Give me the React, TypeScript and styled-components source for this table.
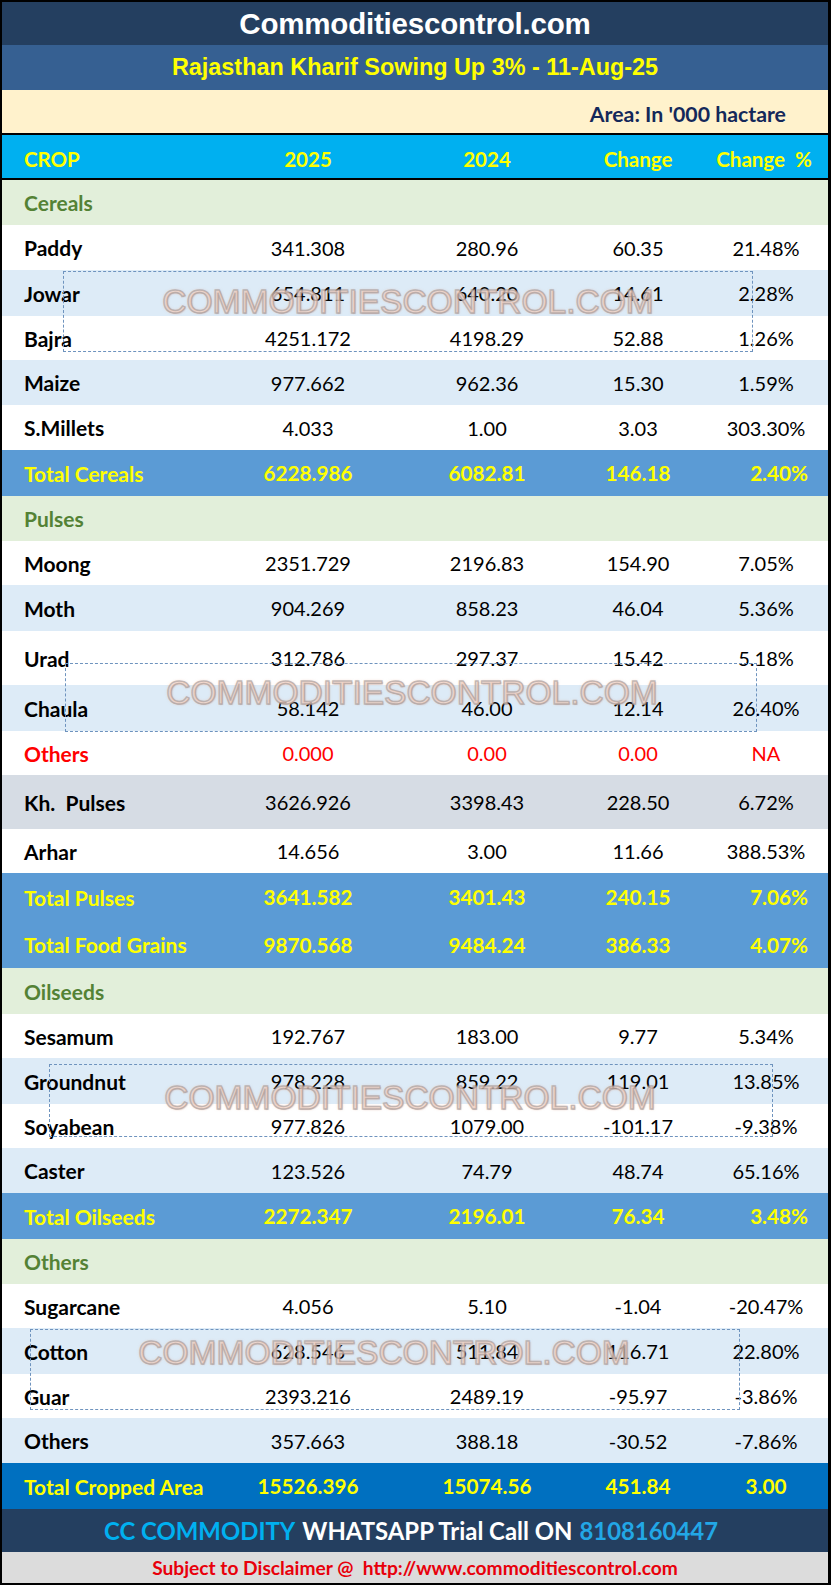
import React from "react";
import styled, { createGlobalStyle, css } from "styled-components";

const GlobalStyle = createGlobalStyle`
  html, body { margin: 0; padding: 0; background: #ffffff; }
  * { box-sizing: border-box; }
`;

const BODY_FONT = `Lato, "Open Sans", "Liberation Sans", sans-serif`;
const HEAD_FONT = `"Liberation Sans", Arial, sans-serif`;

type Kind = "category" | "plain" | "alt" | "total" | "red" | "grey" | "grand";

interface RowData {
  label: string;
  kind: Kind;
  h: number;
  values?: [string, string, string, string];
}

const rows: RowData[] = [
  { label: "Cereals", kind: "category", h: 45 },
  { label: "Paddy", kind: "plain", h: 45, values: ["341.308", "280.96", "60.35", "21.48%"] },
  { label: "Jowar", kind: "alt", h: 46, values: ["654.811", "640.20", "14.61", "2.28%"] },
  { label: "Bajra", kind: "plain", h: 44, values: ["4251.172", "4198.29", "52.88", "1.26%"] },
  { label: "Maize", kind: "alt", h: 45, values: ["977.662", "962.36", "15.30", "1.59%"] },
  { label: "S.Millets", kind: "plain", h: 45, values: ["4.033", "1.00", "3.03", "303.30%"] },
  { label: "Total Cereals", kind: "total", h: 46, values: ["6228.986", "6082.81", "146.18", "2.40%"] },
  { label: "Pulses", kind: "category", h: 45 },
  { label: "Moong", kind: "plain", h: 44, values: ["2351.729", "2196.83", "154.90", "7.05%"] },
  { label: "Moth", kind: "alt", h: 46, values: ["904.269", "858.23", "46.04", "5.36%"] },
  { label: "Urad", kind: "plain", h: 54, values: ["312.786", "297.37", "15.42", "5.18%"] },
  { label: "Chaula", kind: "alt", h: 46, values: ["58.142", "46.00", "12.14", "26.40%"] },
  { label: "Others", kind: "red", h: 44, values: ["0.000", "0.00", "0.00", "NA"] },
  { label: "Kh.  Pulses", kind: "grey", h: 54, values: ["3626.926", "3398.43", "228.50", "6.72%"] },
  { label: "Arhar", kind: "plain", h: 44, values: ["14.656", "3.00", "11.66", "388.53%"] },
  { label: "Total Pulses", kind: "total", h: 48, values: ["3641.582", "3401.43", "240.15", "7.06%"] },
  { label: "Total Food Grains", kind: "total", h: 47, values: ["9870.568", "9484.24", "386.33", "4.07%"] },
  { label: "Oilseeds", kind: "category", h: 46 },
  { label: "Sesamum", kind: "plain", h: 44, values: ["192.767", "183.00", "9.77", "5.34%"] },
  { label: "Groundnut", kind: "alt", h: 46, values: ["978.228", "859.22", "119.01", "13.85%"] },
  { label: "Soyabean", kind: "plain", h: 44, values: ["977.826", "1079.00", "-101.17", "-9.38%"] },
  { label: "Caster", kind: "alt", h: 45, values: ["123.526", "74.79", "48.74", "65.16%"] },
  { label: "Total Oilseeds", kind: "total", h: 46, values: ["2272.347", "2196.01", "76.34", "3.48%"] },
  { label: "Others", kind: "category", h: 45 },
  { label: "Sugarcane", kind: "plain", h: 44, values: ["4.056", "5.10", "-1.04", "-20.47%"] },
  { label: "Cotton", kind: "alt", h: 46, values: ["628.546", "511.84", "116.71", "22.80%"] },
  { label: "Guar", kind: "plain", h: 44, values: ["2393.216", "2489.19", "-95.97", "-3.86%"] },
  { label: "Others", kind: "alt", h: 45, values: ["357.663", "388.18", "-30.52", "-7.86%"] },
  { label: "Total Cropped Area", kind: "grand", h: 46, values: ["15526.396", "15074.56", "451.84", "3.00"] },
];

const watermarks = [
  { fx: 61, fy: 269, fw: 690, fh: 81, ty: 300, cx: 406 },
  { fx: 63, fy: 661, fw: 692, fh: 69, ty: 691, cx: 410 },
  { fx: 47, fy: 1062, fw: 724, fh: 73, ty: 1096, cx: 408 },
  { fx: 28, fy: 1327, fw: 710, fh: 81, ty: 1351, cx: 382 },
];

const bgFor: Record<Kind, string> = {
  category: "#E2EFDA",
  plain: "#FFFFFF",
  alt: "#DDEBF7",
  total: "#5B9BD5",
  red: "#FFFFFF",
  grey: "#D6DCE4",
  grand: "#0070C0",
};

const colorFor: Record<Kind, string> = {
  category: "#548235",
  plain: "#000000",
  alt: "#000000",
  total: "#FFFF00",
  red: "#FF0000",
  grey: "#000000",
  grand: "#FFFF00",
};

const Sheet = styled.div`
  position: relative;
  width: 831px;
  border: 2px solid #000;
  border-right-width: 3px;
  background: #fff;
  font-family: ${BODY_FONT};
`;

const TitleBar = styled.div`
  height: 43px;
  background: #243F60;
  display: flex;
  align-items: center;
  justify-content: center;
  color: #ffffff;
  font-family: ${HEAD_FONT};
  font-weight: 700;
  font-size: 29.5px;
  letter-spacing: -0.2px;
`;

const SubtitleBar = styled.div`
  height: 45px;
  background: #366092;
  display: flex;
  align-items: center;
  justify-content: center;
  color: #FFFF00;
  font-family: ${HEAD_FONT};
  font-weight: 700;
  font-size: 23.4px;
`;

const AreaBar = styled.div`
  height: 45px;
  background: #FFF2CC;
  border-bottom: 2px solid #000;
  display: flex;
  align-items: center;
  justify-content: flex-end;
  padding: 4px 42px 0 0;
  color: #14285A;
  font-weight: 700;
  font-size: 21.3px;
`;

const gridCols = css`
  display: grid;
  grid-template-columns: 216px 180px 178px 124px 1fr;
  align-items: center;
`;

const HeaderRow = styled.div`
  ${gridCols};
  height: 45px;
  background: #00B0F0;
  border-bottom: 2px solid #000;
  padding-top: 4px;
  color: #FFFF00;
  font-weight: 700;
  font-size: 20.5px;
`;

const HeadCell = styled.div<{ $left?: boolean }>`
  text-align: ${(p) => (p.$left ? "left" : "center")};
  padding-left: ${(p) => (p.$left ? "22px" : "0")};
  white-space: pre;
`;

const Row = styled.div<{ $kind: Kind; $h: number }>`
  ${gridCols};
  height: ${(p) => p.$h}px;
  background: ${(p) => bgFor[p.$kind]};
  color: ${(p) => colorFor[p.$kind]};
  font-size: ${(p) => (p.$kind === "total" || p.$kind === "grand" ? "20.7px" : "20px")};
  font-weight: ${(p) => (p.$kind === "total" || p.$kind === "grand" ? 700 : 400)};
`;

const LabelCell = styled.div`
  padding-left: 22px;
  font-weight: 700;
  font-size: 21px;
  white-space: pre;
`;

const NumCell = styled.div`
  text-align: center;
`;

const PctCell = styled.div<{ $right?: boolean }>`
  text-align: ${(p) => (p.$right ? "right" : "center")};
  padding-left: 4px;
  padding-right: ${(p) => (p.$right ? "20px" : "0")};
`;

const Frame = styled.div<{ $x: number; $y: number; $w: number; $h: number }>`
  position: absolute;
  left: ${(p) => p.$x}px;
  top: ${(p) => p.$y}px;
  width: ${(p) => p.$w}px;
  height: ${(p) => p.$h}px;
  border: 1px dashed #6E93BE;
  pointer-events: none;
`;

const Stamp = styled.div<{ $cx: number; $cy: number }>`
  position: absolute;
  left: ${(p) => p.$cx}px;
  top: ${(p) => p.$cy}px;
  transform: translate(-50%, -50%);
  font-family: ${HEAD_FONT};
  font-size: 33.5px;
  font-weight: 400;
  white-space: nowrap;
  color: rgba(250, 228, 218, 0.55);
  -webkit-text-stroke: 1.4px rgba(160, 150, 148, 0.6);
  text-shadow: 0 0 3px rgba(228, 160, 135, 0.55), 1px 1px 1px rgba(195, 160, 150, 0.4);
  pointer-events: none;
`;

const PromoBar = styled.div`
  height: 43px;
  background: #243F60;
  display: flex;
  align-items: center;
  justify-content: center;
  gap: 7px;
  font-weight: 700;
  font-size: 23.9px;
  color: #ffffff;
  padding-right: 8px;
`;

const Tint = styled.span<{ $c: string }>`
  color: ${(p) => p.$c};
`;

const DisclaimerBar = styled.div`
  height: 31px;
  background: #DCDCDC;
  display: flex;
  align-items: center;
  justify-content: center;
  color: #E8000B;
  font-weight: 700;
  font-size: 19.2px;
  white-space: pre;
`;

export default function App() {
  return (
    <>
      <GlobalStyle />
      <Sheet>
        <TitleBar>Commoditiescontrol.com</TitleBar>
        <SubtitleBar>Rajasthan Kharif Sowing Up 3% - 11-Aug-25</SubtitleBar>
        <AreaBar>Area: In '000 hactare</AreaBar>
        <HeaderRow>
          <HeadCell $left>CROP</HeadCell>
          <HeadCell>2025</HeadCell>
          <HeadCell>2024</HeadCell>
          <HeadCell>Change</HeadCell>
          <HeadCell>{"Change  %"}</HeadCell>
        </HeaderRow>
        {rows.map((r, i) => (
          <Row key={i} $kind={r.kind} $h={r.h}>
            <LabelCell>{r.label}</LabelCell>
            {r.values && (
              <>
                <NumCell>{r.values[0]}</NumCell>
                <NumCell>{r.values[1]}</NumCell>
                <NumCell>{r.values[2]}</NumCell>
                <PctCell $right={r.kind === "total"}>{r.values[3]}</PctCell>
              </>
            )}
          </Row>
        ))}
        <PromoBar>
          <Tint $c="#00B0F0">CC COMMODITY</Tint>
          <span>WHATSAPP Trial Call ON</span>
          <Tint $c="#22A7E6">8108160447</Tint>
        </PromoBar>
        <DisclaimerBar>{"Subject to Disclaimer @  http://www.commoditiescontrol.com"}</DisclaimerBar>
        {watermarks.map((w, i) => (
          <React.Fragment key={i}>
            <Frame $x={w.fx} $y={w.fy} $w={w.fw} $h={w.fh} />
            <Stamp $cx={w.cx} $cy={w.ty}>COMMODITIESCONTROL.COM</Stamp>
          </React.Fragment>
        ))}
      </Sheet>
    </>
  );
}
